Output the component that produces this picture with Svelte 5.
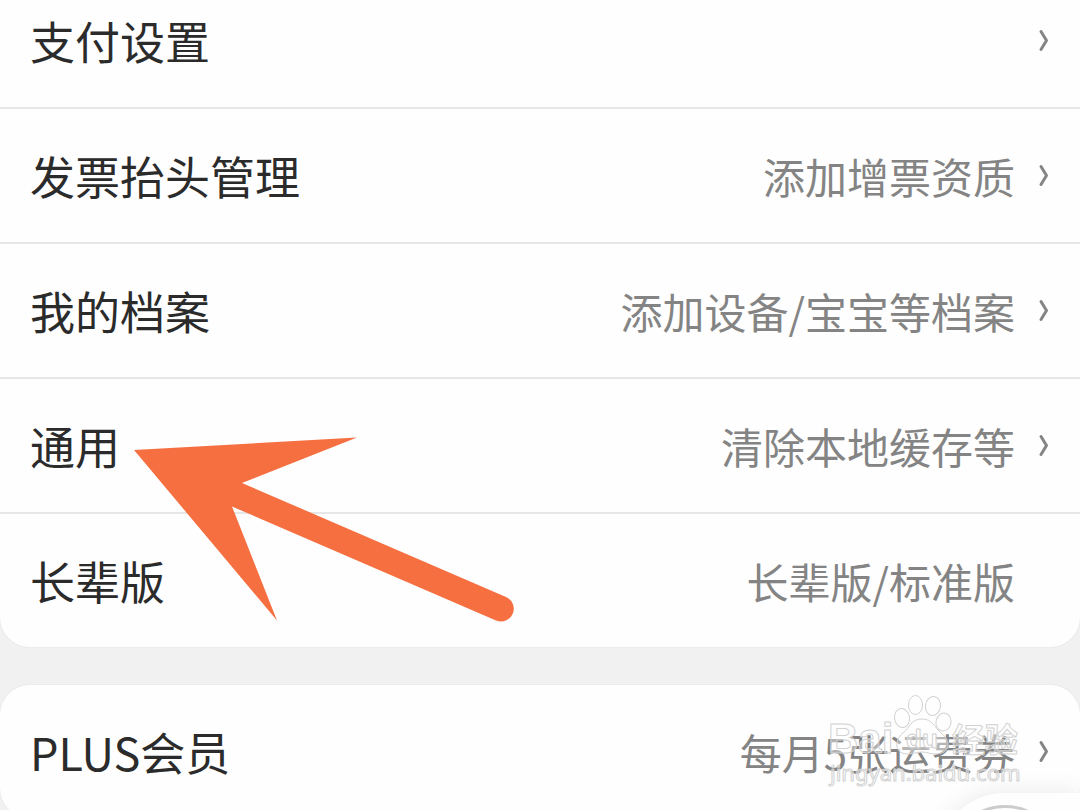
<script>
  const groups = [
    [
      { label: '支付设置', value: '', arrow: true },
      { label: '发票抬头管理', value: '添加增票资质', arrow: true },
      { label: '我的档案', value: '添加设备/宝宝等档案', arrow: true },
      { label: '通用', value: '清除本地缓存等', arrow: true },
      { label: '长辈版', value: '长辈版/标准版', arrow: false }
    ],
    [
      { label: 'PLUS会员', value: '每月5张运费券', arrow: true }
    ]
  ];
</script>

<div class="page">
  <main class="settings">
    {#each groups as rows}
      <ul class="group">
        {#each rows as row}
          <li>
            <button class="row" type="button">
              <span class="label">{row.label}</span>
              <span class="value">{row.value}</span>
              <span class="chevron">
                {#if row.arrow}
                  <svg width="12" height="24" viewBox="0 0 12 24" aria-hidden="true">
                    <path d="M4 2.500 L9.500 11.500 L4 20.500" />
                  </svg>
                {/if}
              </span>
            </button>
          </li>
        {/each}
      </ul>
    {/each}
  </main>

  <!-- arrow pointing at 通用 -->
  <svg class="pointer" width="382" height="188" viewBox="0 0 382 188" aria-hidden="true">
    <path d="M0 14 L223 1.500 L108 47 L372 161 A12.700 12.700 0 0 1 362 184.500 L98 70.500 L143 184.500 Z" />
  </svg>

  <!-- watermark -->
  <svg class="watermark" width="210" height="100" viewBox="0 0 210 100">
    <g class="paw">
      <ellipse cx="79" cy="28" rx="7.500" ry="9.500" transform="rotate(-8 79 28)" />
      <ellipse cx="92.500" cy="15" rx="7" ry="9.500" />
      <ellipse cx="110" cy="16" rx="7.500" ry="9.500" transform="rotate(8 110 16)" />
      <ellipse cx="120.500" cy="32" rx="7.500" ry="9" transform="rotate(12 120.500 32)" />
      <path d="M99 29 C88 29 87 37 80 43 C70 51 72 65 86 64 C92 63.500 94 62 99 62 C104 62 107 64 113 64 C127 64 129 51 118 43 C111 37 110 29 99 29 Z" />
    </g>
    <text class="brand" x="5" y="63">Bai</text>
    <text class="du" x="83" y="58">du</text>
    <text class="brand-cn" x="129" y="62">经验</text>
    <text class="url" x="7" y="91">jingyan.baidu.com</text>
  </svg>

  <button class="float" type="button" aria-label="客服">
    <span class="ring"></span>
  </button>
</div>

<style>
  :global(body) {
    margin: 0;
    background: #f1f1f1;
    font-family: 'Noto Sans CJK SC', 'Noto Sans', sans-serif;
  }

  .page {
    position: relative;
    height: 100vh;
    overflow: hidden;
    background: #f1f1f1;
  }

  /* list is scrolled a little, so the first row is cut off */
  .settings {
    display: flex;
    flex-direction: column;
    gap: 38px;
    margin-top: -26px;
  }

  .group {
    margin: 0;
    padding: 0;
    list-style: none;
    background: #fefefe;
    border-radius: 30px;
    box-shadow: 0 0 0 1px #ebebeb;
    overflow: hidden;
  }

  li + li {
    border-top: 2px solid #e6e6e6;
  }

  .row {
    display: flex;
    align-items: center;
    width: 100%;
    height: 133px;
    padding: 0 31px 0 30px;
    border: 0;
    background: none;
    font-family: inherit;
    text-align: left;
    cursor: pointer;
  }

  .label {
    flex: 1;
    font-size: 45px;
    line-height: 60px;
    color: #2b2b2b;
  }

  .value {
    font-size: 42px;
    line-height: 60px;
    color: #848484;
  }

  .chevron {
    display: flex;
    width: 12px;
    height: 24px;
    margin-left: 22px;
  }

  .chevron svg {
    overflow: visible;
  }

  .chevron path {
    fill: none;
    stroke: #848484;
    stroke-width: 3;
    stroke-linecap: round;
    stroke-linejoin: round;
  }

  .pointer {
    position: absolute;
    top: 436px;
    left: 134px;
    fill: #f66f40;
    pointer-events: none;
  }

  .watermark {
    position: absolute;
    top: 690px;
    left: 823px;
    pointer-events: none;
  }

  .watermark text,
  .paw {
    fill: #ffffff;
    fill-opacity: 0.4;
    stroke: #d2d2d2;
    stroke-width: 1;
    stroke-linejoin: round;
  }

  .brand {
    font: bold 42px 'Liberation Sans', sans-serif;
  }

  .du {
    font: bold 26px 'Liberation Sans', sans-serif;
  }

  .brand-cn {
    font: bold 33px 'Noto Sans CJK SC', sans-serif;
  }

  .url {
    font: 22px 'Noto Sans', sans-serif;
  }

  .float {
    position: absolute;
    right: 0;
    top: 793px;
    width: 143px;
    height: 136px;
    padding: 12px;
    border: 0;
    border-radius: 68px 0 0 68px;
    background: #fefefe;
    box-shadow: 0 0 24px rgba(0, 0, 0, 0.09);
  }

  .ring {
    display: block;
    width: 112px;
    height: 112px;
    box-sizing: border-box;
    border: 3px solid #cccccc;
    border-radius: 50%;
  }
</style>
